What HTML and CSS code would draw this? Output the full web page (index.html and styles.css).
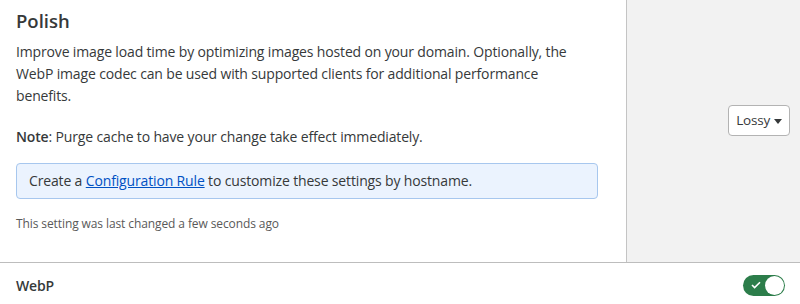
FILE: index.html
```html
<!DOCTYPE html>
<html lang="en">
<head>
    <meta charset="UTF-8">
    <meta name="viewport" content="width=device-width, initial-scale=1.0">
    <title>Speed - Optimization</title>
    <link rel="stylesheet" href="styles.css">
</head>
<body>
    <div class="setting">
        <div class="setting-main">
            <h3>Polish</h3>
            <p>Improve image load time by optimizing images hosted on your domain. Optionally, the WebP image codec can be used with supported clients for additional performance benefits.</p>
            <p><strong>Note</strong>: Purge cache to have your change take effect immediately.</p>
            <div class="info-box">
                Create a <a href="#">Configuration Rule</a> to customize these settings by hostname.
            </div>
            <p class="last-changed">This setting was last changed a few seconds ago</p>
        </div>
        <div class="setting-control">
            <button class="dropdown">Lossy <span class="caret"></span></button>
        </div>
    </div>

    <div class="setting-row">
        <span class="row-label">WebP</span>
        <label class="toggle">
            <input type="checkbox" checked>
            <span class="track">
                <svg class="check" width="10" height="8" viewBox="0 0 10 8"><path d="M1 4l2.6 2.6L9 1.2" fill="none" stroke="#fff" stroke-width="1.6"/></svg>
                <span class="knob"></span>
            </span>
        </label>
    </div>
</body>
</html>
```

FILE: styles.css
```css
body {
    font-family: 'Open Sans', 'Noto Sans', sans-serif;
    color: #36393a;
    background-color: #fff;
    margin: 0;
    padding: 0;
    font-size: 14px;
    letter-spacing: -0.15px;
}
.setting {
    display: flex;
    border-bottom: 1px solid #bdbdbd;
    height: 262px;
}
.setting-main {
    flex: 1;
    padding: 7px 16px 0;
}
.setting-main h3 {
    margin: 0 0 6px;
    font-size: 18.5px;
    font-weight: 600;
    line-height: 28px;
    letter-spacing: 0;
}
.setting-main p {
    max-width: 575px;
    margin: 0 0 19px;
    line-height: 22px;
}
.setting-main strong {
    font-weight: 600;
}
.info-box {
    width: 556px;
    background-color: #ebf3fe;
    border: 1px solid #a7c7ee;
    border-radius: 4px;
    padding: 7px 12px;
    line-height: 20px;
    margin: -4px 0 16px;
}
.info-box a {
    color: #0051c3;
    text-decoration: underline;
}
.setting-main p.last-changed {
    font-size: 12px;
    color: #595959;
    margin: 0;
    line-height: 18px;
    letter-spacing: -0.1px;
}
.setting-control {
    box-sizing: border-box;
    width: 174px;
    background-color: #f2f2f2;
    border-left: 1px solid #c4c4c4;
    display: flex;
    align-items: center;
    justify-content: flex-end;
    padding: 0 10px 22px 0;
}
.dropdown {
    font-family: inherit;
    font-size: 13.5px;
    letter-spacing: -0.2px;
    color: #36393a;
    background: #fff;
    border: 1px solid #b3b3b3;
    border-radius: 4px;
    height: 31px;
    padding: 0 7px;
    display: flex;
    align-items: center;
    gap: 4px;
}
.caret {
    width: 0;
    height: 0;
    border-left: 4.5px solid transparent;
    border-right: 4.5px solid transparent;
    border-top: 5px solid #36393a;
    margin-top: 2px;
}
.setting-row {
    display: flex;
    align-items: center;
    justify-content: space-between;
    height: 44px;
    padding: 0 15px 0 16px;
}
.row-label {
    font-weight: 600;
}
.toggle input {
    display: none;
}
.track {
    display: flex;
    align-items: center;
    justify-content: space-between;
    width: 42px;
    height: 21px;
    box-sizing: border-box;
    padding: 0 1px 0 8px;
    border-radius: 11px;
    background-color: #2c7d4a;
}
.knob {
    width: 19px;
    height: 19px;
    border-radius: 50%;
    background: #fff;
}
```
